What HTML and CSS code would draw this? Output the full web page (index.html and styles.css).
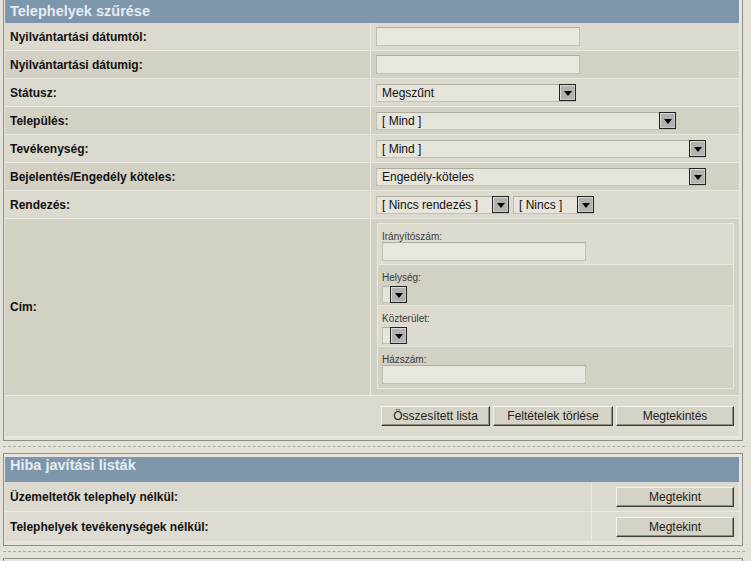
FILE: index.html
```html
<!DOCTYPE html>
<html lang="hu">
<head>
<meta charset="utf-8">
<title>Telephelyek szűrése</title>
<link rel="stylesheet" href="styles.css">
</head>
<body>
<div class="panel panel-first">
  <div class="hdr">Telephelyek szűrése</div>
  <table class="grid">
    <tr class="a"><th>Nyilvántartási dátumtól:</th><td><input class="txt" type="text"></td></tr>
    <tr class="b"><th>Nyilvántartási dátumig:</th><td><input class="txt" type="text"></td></tr>
    <tr class="a"><th>Státusz:</th><td><div class="sel w200"><span class="v">Megszűnt</span><span class="dd"><svg width="8" height="5" viewBox="0 0 8 5"><path d="M0 0h8L4 5z" fill="#000"/></svg></span></div></td></tr>
    <tr class="b"><th>Település:</th><td><div class="sel w300"><span class="v">[ Mind ]</span><span class="dd"><svg width="8" height="5" viewBox="0 0 8 5"><path d="M0 0h8L4 5z" fill="#000"/></svg></span></div></td></tr>
    <tr class="a"><th>Tevékenység:</th><td><div class="sel w330"><span class="v">[ Mind ]</span><span class="dd"><svg width="8" height="5" viewBox="0 0 8 5"><path d="M0 0h8L4 5z" fill="#000"/></svg></span></div></td></tr>
    <tr class="b"><th>Bejelentés/Engedély köteles:</th><td><div class="sel w330"><span class="v">Engedély-köteles</span><span class="dd"><svg width="8" height="5" viewBox="0 0 8 5"><path d="M0 0h8L4 5z" fill="#000"/></svg></span></div></td></tr>
    <tr class="a"><th>Rendezés:</th><td><div class="pair"><div class="sel w133"><span class="v">[ Nincs rendezés ]</span><span class="dd"><svg width="8" height="5" viewBox="0 0 8 5"><path d="M0 0h8L4 5z" fill="#000"/></svg></span></div><div class="sel w81"><span class="v">[ Nincs ]</span><span class="dd"><svg width="8" height="5" viewBox="0 0 8 5"><path d="M0 0h8L4 5z" fill="#000"/></svg></span></div></div></td></tr>
    <tr class="b"><th>Cím:</th><td class="addr-cell">
      <div class="addr">
        <div class="sr a"><div class="sl">Irányítószám:</div><input class="txt" type="text"></div>
        <div class="sr b"><div class="sl">Helység:</div><div class="sel mini"><span class="v"></span><span class="dd"><svg width="8" height="5" viewBox="0 0 8 5"><path d="M0 0h8L4 5z" fill="#000"/></svg></span></div></div>
        <div class="sr a"><div class="sl">Közterület:</div><div class="sel mini"><span class="v"></span><span class="dd"><svg width="8" height="5" viewBox="0 0 8 5"><path d="M0 0h8L4 5z" fill="#000"/></svg></span></div></div>
        <div class="sr b last"><div class="sl">Házszám:</div><input class="txt" type="text"></div>
      </div>
    </td></tr>
    <tr class="a"><td class="actions" colspan="2"><div class="btns"><button class="bt w109">Összesített lista</button><button class="bt w120">Feltételek törlése</button><button class="bt w118">Megtekintés</button></div></td></tr>
  </table>
</div>
<div class="sep"></div>
<div class="panel">
  <div class="hdr">Hiba javítási listák</div>
  <table class="grid grid2">
    <tr class="a"><th>Üzemeltetők telephely nélkül:</th><td class="bc"><button class="bt w118">Megtekint</button></td></tr>
    <tr class="c"><th>Telephelyek tevékenységek nélkül:</th><td class="bc"><button class="bt w118">Megtekint</button></td></tr>
  </table>
</div>
<div class="sep"></div>
<div class="panel stub"></div>
</body>
</html>
```
FILE: styles.css
```css
html, body {
  margin: 0;
  padding: 0;
}
body {
  background: #e4e2d8;
  font-family: "Liberation Sans", Arial, sans-serif;
  font-size: 12px;
  color: #111;
  overflow: hidden;
}
.panel {
  margin: 0 8px 0 3px;
  border: 1px solid #8f8e86;
  padding: 3px 3px 3px 1px;
  background: #e6e4db;
}
.panel-first {
  margin-top: -4px;
}
.hdr {
  height: 25px;
  line-height: 25px;
  background: #7e96ab;
  color: #e6ecf1;
  font: bold 14.5px "Liberation Sans", Arial, sans-serif;
  padding-left: 5px;
}
.panel-first .hdr {
  height: 23px;
  line-height: 23px;
}
.grid {
  width: 100%;
  border-collapse: collapse;
}
.grid th,
.grid td {
  padding: 0;
  border-bottom: 1px solid #eae8e0;
  height: 27px;
}
.grid th {
  text-align: left;
  font-weight: bold;
  padding-left: 5px;
  width: 360px;
  white-space: nowrap;
}
.grid td {
  border-left: 1px solid #eae8e0;
  padding-left: 5px;
}
.grid tr.a { background: #dcd9ce; }
.grid tr.b { background: #d3d0c4; }
.grid tr.c { background: #dedcd2; }

.txt {
  display: block;
  width: 204px;
  height: 19px;
  box-sizing: border-box;
  margin: 0;
  padding: 0;
  border: 1px solid #c2bfb3;
  border-top-color: #aeab9f;
  background: #e8e6dd;
}
.sel {
  display: flex;
  align-items: center;
  height: 18px;
  box-sizing: border-box;
  border: 1px solid #c2bfb3;
  border-top-color: #aeab9f;
  background: #e6e4db;
}
.sel .v {
  flex: 1;
  padding-left: 5px;
  white-space: nowrap;
  overflow: hidden;
  line-height: 16px;
}
.sel .dd {
  width: 17px;
  height: 17px;
  box-sizing: border-box;
  border: 1px solid #222;
  background: #b2b1af;
  box-shadow: inset 1px 1px #dcdbd8, inset -1px -1px #c9c8c5;
  display: flex;
  align-items: center;
  justify-content: center;
  padding-top: 2px;
  margin-right: -1px;
}
.w200 { width: 200px; }
.w300 { width: 300px; }
.w330 { width: 330px; }
.w133 { width: 133px; }
.w81 { width: 81px; }
.pair {
  display: flex;
  gap: 4px;
}
.sel.mini {
  width: 25px;
  height: 17px;
  margin-top: 3px;
}
.sel.mini .v { padding-left: 0; }

.grid td.addr-cell {
  padding: 4px 5px 6px 6px;
}
.addr {
  border: 1px solid #e8e6de;
}
.sr {
  height: 41px;
  padding: 7px 5px 0 4px;
  box-sizing: border-box;
  border-bottom: 1px solid #e8e6de;
}
.sr.last { border-bottom: 0; }
.sr.a { background: #dddad0; }
.sr.b { background: #d3d0c4; }
.sl {
  font-size: 10px;
  line-height: 11px;
  color: #3a3a3a;
}

.grid td.actions {
  height: 40px;
  padding: 0 5px 0 0;
  border-left: 0;
}
.btns {
  display: flex;
  justify-content: flex-end;
  gap: 3px;
}
.bt {
  height: 20px;
  box-sizing: border-box;
  margin: 0;
  padding: 0;
  background: #d5d2c6;
  border: 1px solid;
  border-color: #f4f3ee #3a3a3a #3a3a3a #f4f3ee;
  box-shadow: inset -1px -1px #8f8d85;
  font: 12px "Liberation Sans", Arial, sans-serif;
  color: #222;
}
.w109 { width: 109px; }
.w120 { width: 120px; }
.w118 { width: 118px; }

.grid2 th { width: 581px; }
.grid2 th, .grid2 td { height: 29px; }
.grid2 td.bc {
  text-align: right;
  padding: 0 5px 0 0;
}
.grid2 .bt { vertical-align: middle; }

.sep {
  margin: 5px 6px 6px 3px;
  border-top: 1px dashed #aeab9f;
}
.stub {
  height: 40px;
}
```
